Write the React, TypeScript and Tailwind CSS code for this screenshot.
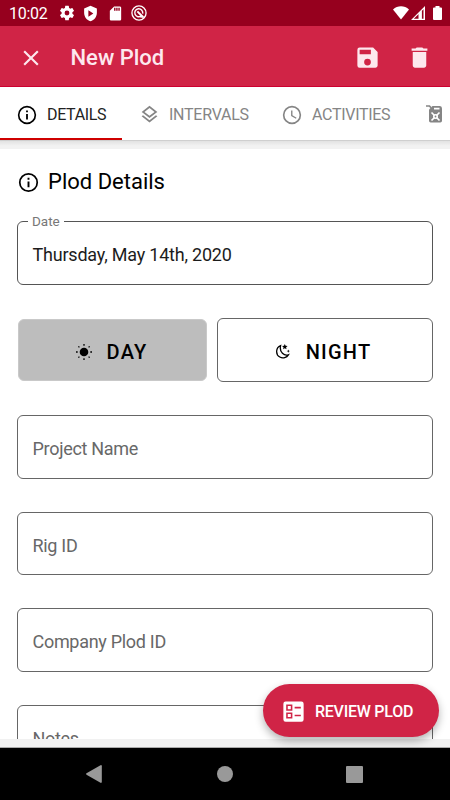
import React from "react";

type IconProps = { d: string; size: number; className?: string };

function Icon({ d, size, className = "" }: IconProps) {
  return (
    <svg width={size} height={size} viewBox="0 0 24 24" fill="currentColor" className={"shrink-0 " + className}>
      <path fillRule="evenodd" d={d} />
    </svg>
  );
}

const paths = {
  gear: "M19.14 12.94c.04-.3.06-.61.06-.94 0-.32-.02-.64-.07-.94l2.03-1.58a.49.49 0 0 0 .12-.61l-1.92-3.32a.49.49 0 0 0-.59-.22l-2.39.96c-.5-.38-1.03-.7-1.62-.94l-.36-2.54a.48.48 0 0 0-.48-.41h-3.84c-.24 0-.43.17-.47.41l-.36 2.54c-.59.24-1.13.57-1.62.94l-2.39-.96a.48.48 0 0 0-.59.22L2.74 8.87c-.12.21-.08.47.12.61l2.03 1.58c-.05.3-.09.63-.09.94s.02.64.07.94l-2.03 1.58a.49.49 0 0 0-.12.61l1.92 3.32c.12.22.37.29.59.22l2.39-.96c.5.38 1.03.7 1.62.94l.36 2.54c.05.24.24.41.48.41h3.84c.24 0 .44-.17.47-.41l.36-2.54c.59-.24 1.13-.56 1.62-.94l2.39.96c.22.08.47 0 .59-.22l1.92-3.32a.49.49 0 0 0-.12-.61zM12 15.2A3.2 3.2 0 1 1 12 8.8a3.2 3.2 0 0 1 0 6.4z",
  shield: "M12 1 3 5v6c0 5.55 3.84 10.74 9 12 5.16-1.26 9-6.45 9-12V5zM9 7.5l7 4.5-7 4.5z",
  sd: "M18 2h-8L4 8v12c0 1.1.9 2 2 2h12c1.1 0 2-.9 2-2V4c0-1.1-.9-2-2-2zm-6 6h-2V4h2zm3 0h-2V4h2zm3 0h-2V4h2z",
  info: "M11 7h2v2h-2zm0 4h2v6h-2zm1-9a10 10 0 1 0 0 20 10 10 0 0 0 0-20zm0 18.200a8.200 8.200 0 1 1 0-16.400 8.200 8.200 0 0 1 0 16.400z",
  layers: "M11.99 18.54l-7.37-5.73L3 14.070l9 7 9-7-1.63-1.270zM12 16l7.36-5.730L21 9l-9-7-9 7 1.630 1.270zm0-11.470L17.740 9 12 13.470 6.260 9z",
  clock: "M12 2a10 10 0 1 0 0 20 10 10 0 0 0 0-20zm0 18.200a8.200 8.200 0 1 1 0-16.400 8.200 8.200 0 0 1 0 16.400zM12.500 7H11v6l5.250 3.150.75-1.230-4.500-2.670z",
  close: "M19 6.41 17.590 5 12 10.590 6.410 5 5 6.410 10.590 12 5 17.590 6.410 19 12 13.410 17.590 19 19 17.590 13.410 12z",
  trash: "M6 19c0 1.100.9 2 2 2h8c1.100 0 2-.9 2-2V7H6zM19 4h-3.500l-1-1h-5l-1 1H5v2h14z",
  save: "M17 3H5a2 2 0 0 0-2 2v14a2 2 0 0 0 2 2h14c1.100 0 2-.9 2-2V7zm-5 16a3 3 0 1 1 0-6 3 3 0 0 1 0 6zm3-10H5V5h10z",
  ballot: "M5 3h14a2 2 0 0 1 2 2v14a2 2 0 0 1-2 2H5a2 2 0 0 1-2-2V5a2 2 0 0 1 2-2zM13 7.800h5.500v1.500h-5.500zM13 14.800h5.500v1.500h-5.500zM5.500 5.800h5.500v5.500H5.500zM6.900 7.200v2.700h2.700V7.200zM5.500 12.800h5.500v5.500H5.500zM6.900 14.200v2.700h2.700v-2.700z",
};

function DoNotTrack() {
  return (
    <svg width="16" height="16" viewBox="0 0 24 24" fill="none" stroke="white" className="shrink-0">
      <circle cx="12" cy="12" r="10.600" strokeWidth="2" />
      <path d="M15.500 16.300A6 6 0 1 1 17.500 13" strokeWidth="2.200" />
      <path d="M9.500 9.500 18 18" strokeWidth="3" />
      <path d="M14 18h6" strokeWidth="2" />
    </svg>
  );
}

function StatusBar() {
  return (
    <div className="flex h-[26px] shrink-0 items-center bg-[#96001e] pl-[9px] pr-[8px] text-white">
      <span className="w-[49px] pt-[2px] text-[16px] leading-[26px] tracking-[-0.3px]">10:02</span>
      <Icon d={paths.gear} size={18} className="mr-[6px]" />
      <Icon d={paths.shield} size={17} className="mr-[8px]" />
      <Icon d={paths.sd} size={17} className="mr-[7px]" />
      <DoNotTrack />
      <svg width="16" height="14" viewBox="0 0 16 14" className="ml-auto" fill="white">
        <path d="M0 3.500C4.500-.8 11.500-.8 16 3.500L8 13.500z" />
      </svg>
      <svg width="14" height="14" viewBox="0 0 14 14" className="ml-[2px] mr-[8px]">
        <path fill="white" fillRule="evenodd" d="M0 14 14 0v14zM2.800 12.800h4.700V8.200l3.400-3.400v8h1.600V3.300z" />
      </svg>
      <svg width="9" height="14" viewBox="0 0 9 14" fill="white">
        <path d="M2.500 0h4v1.500H8q1 0 1 1V13q0 1-1 1H1q-1 0-1-1V2.500q0-1 1-1h1.500z" />
      </svg>
    </div>
  );
}

function AppBar() {
  return (
    <header className="flex h-[61px] shrink-0 items-center border-b border-[#cd0030] bg-[#d02446] pl-[17.500px] pr-[17.500px] pt-[3px] text-[#fde8ee]">
      <Icon d={paths.close} size={26} />
      <h1 className="ml-[27px] pt-px text-[22px] font-medium leading-none">New Plod</h1>
      <Icon d={paths.save} size={27} className="ml-auto mr-[25px]" />
      <Icon d={paths.trash} size={27} />
    </header>
  );
}

function JerryCan() {
  return (
    <svg width="17" height="18" viewBox="0 0 17 18" className="shrink-0" fill="currentColor">
      <path d="M0 .2h3.800L5.500 2 4.500 3.200 3 1.700H0z" />
      <path d="M6.500 1H14q2 .3 2 2.500v12.300q0 1.700-1.700 1.700H4.700Q3 17.500 3 15.800V4.500z" />
      <path d="M8 3.600h5.500M5.500 7.500l8 8M13.500 7.500l-8 8" stroke="white" strokeWidth="1.700" />
      <circle cx="9.500" cy="11.500" r="2.500" fill="white" />
      <circle cx="9.500" cy="11.500" r="0.900" />
    </svg>
  );
}

function Tabs() {
  return (
    <nav className="z-10 flex h-[54px] shrink-0 overflow-hidden border-b border-[#cfcfcf] bg-white text-[16px] text-[#858585]">
      <div className="flex w-[122px] shrink-0 items-center border-b-2 border-[#cf0000] pl-[16px] pt-[4px] text-black">
        <Icon d={paths.info} size={22} />
        <span className="ml-[9px] tracking-[-0.35px] text-[#222]">DETAILS</span>
      </div>
      <div className="flex w-[143px] shrink-0 items-center pl-[17px] pt-[2px]">
        <Icon d={paths.layers} size={21} />
        <span className="ml-[9px] tracking-[-0.25px]">INTERVALS</span>
      </div>
      <div className="flex w-[161px] shrink-0 items-center pl-[16px] pt-[2px]">
        <Icon d={paths.clock} size={22} />
        <span className="ml-[9px] tracking-[-0.3px]">ACTIVITIES</span>
      </div>
      <div className="flex shrink-0 items-center">
        <JerryCan />
      </div>
    </nav>
  );
}

function Field({ label, value }: { label: string; value?: string }) {
  if (value) {
    return (
      <fieldset className="mx-[17px] h-[72px] shrink-0 rounded-[6px] border border-[#555] px-[10px]">
        <legend className="px-[4px] text-[13.500px] leading-[17px] text-[#777]">{label}</legend>
        <div className="pl-[4.500px] pt-[12px] text-[18px] leading-[26px] tracking-[-0.21px] text-[#1c1c1c]">{value}</div>
      </fieldset>
    );
  }
  return (
    <div className="mx-[17px] mb-[33px] flex h-[63.5px] shrink-0 items-center rounded-[6px] border border-[#666] pl-[14.500px] pt-[3.500px] text-[18px] tracking-[-0.3px] text-[#686868]">
      {label}
    </div>
  );
}

function Sun() {
  return (
    <svg width="16" height="16" viewBox="0 0 16 16" className="shrink-0">
      <circle cx="8" cy="8" r="4.300" />
      <g stroke="black" strokeWidth="1.300">
        <path d="M8 0v1.700M8 14.300V16M0 8h1.700M14.300 8H16M2.400 2.400l1 1M12.600 12.600l1 1M2.400 13.600l1-1M12.600 3.400l1-1" />
      </g>
    </svg>
  );
}

function Moon() {
  return (
    <svg width="14" height="15" viewBox="0 0 14 15" className="shrink-0">
      <path d="M4.600 1.600C-.3 3.500-.7 10.500 3.800 13c3.200 1.800 7 .5 8.600-2.200C8.500 12.200 3 8.500 4.600 1.600z" fill="none" stroke="black" strokeWidth="1.300" />
      <path d="m8.800 0 .8 1.800 2 .2-1.500 1.300.4 2-1.700-1-1.700 1 .4-2L6 2l2-.2zM12.300 5.500l.5 1.200 1.200.4-1.200.5-.5 1.200-.5-1.200-1.200-.5 1.200-.4z" />
    </svg>
  );
}

function ShiftToggle() {
  return (
    <div className="mx-[18px] mb-[33px] mt-[33px] flex h-[64px] shrink-0 items-center text-[20px] font-medium tracking-[1.200px] text-black">
      <button className="flex h-[62px] w-[189px] items-center justify-center rounded-[6px] border border-[#c9c9c9] bg-[#bdbdbd] pr-[2px] pt-[3px]">
        <Sun />
        <span className="ml-[15px]">DAY</span>
      </button>
      <button className="ml-[10px] mr-[-1px] flex h-[64px] flex-1 items-center justify-center rounded-[6px] border border-[#666] pr-[3px] pt-[3px]">
        <Moon />
        <span className="ml-[16px]">NIGHT</span>
      </button>
    </div>
  );
}

function ReviewButton() {
  return (
    <button className="absolute left-[263px] top-[684px] z-20 flex h-[52.5px] w-[176px] items-center rounded-full bg-[#d02446] pl-[17px] pt-[2px] text-white shadow-[0_4px_8px_rgba(0,0,0,0.3)]">
      <Icon d={paths.ballot} size={27} />
      <span className="ml-[8px] whitespace-nowrap pt-px text-[16px] font-medium tracking-[-0.25px]">REVIEW PLOD</span>
    </button>
  );
}

function NavigationBar() {
  return (
    <div className="flex h-[52px] shrink-0 items-center bg-black pl-[86px]">
      <svg width="16" height="18" viewBox="0 0 16 18" fill="#999">
        <path d="M.5 8.300 14.500.2q1.300-.5 1.300 1v15.600q0 1.500-1.300 1L.5 9.700q-.8-.7 0-1.400z" />
      </svg>
      <div className="ml-[115px] h-[16px] w-[16px] rounded-full bg-[#999]" />
      <div className="ml-[113px] h-[17px] w-[17px] rounded-[1px] bg-[#999]" />
    </div>
  );
}

export default function App() {
  return (
    <div className="relative flex h-[800px] w-[450px] flex-col overflow-hidden bg-[#f1f1f1] font-[Roboto,sans-serif]">
      <StatusBar />
      <AppBar />
      <Tabs />
      <div className="h-[8px] shrink-0 bg-gradient-to-b from-[#e2e2e2] to-[#f2f2f2] to-60%" />
      <main className="flex h-[590px] shrink-0 flex-col overflow-hidden bg-white">
        <div className="mb-[15px] flex h-[49px] shrink-0 items-center pl-[17px] pt-[17px] text-black">
          <Icon d={paths.info} size={23} />
          <h2 className="ml-[8px] text-[22px] leading-[30px]">Plod Details</h2>
        </div>
        <Field label="Date" value="Thursday, May 14th, 2020" />
        <ShiftToggle />
        <Field label="Project Name" />
        <Field label="Rig ID" />
        <Field label="Company Plod ID" />
        <Field label="Notes" />
      </main>
      <div className="h-[9px] shrink-0 border-b border-[#aaa]" />
      <NavigationBar />
      <ReviewButton />
    </div>
  );
}
